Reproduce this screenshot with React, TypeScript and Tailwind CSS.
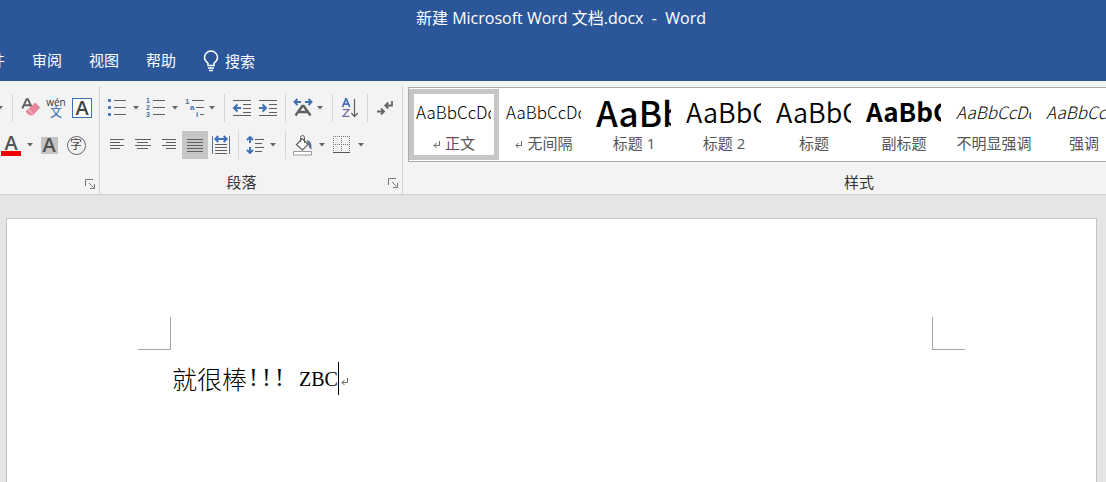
import type { ReactNode } from "react";

const UI = "font-['Open_Sans','Noto_Sans_CJK_SC',sans-serif]";
const BLUE = "#3f6fb5";
const INK = "#5f5f5f";

type ToolProps = { label: string; className?: string; children: ReactNode };

function Tool({ label, className = "w-5", children }: ToolProps) {
  return (
    <button type="button" aria-label={label} title={label} className={`flex h-7 shrink-0 items-center justify-center ${className}`}>
      {children}
    </button>
  );
}

function Chevron({ label, className = "" }: { label: string; className?: string }) {
  return (
    <button type="button" aria-label={label} className={`flex h-7 w-2 shrink-0 items-center justify-center ${className}`}>
      <svg width="8" height="6" viewBox="0 0 8 6" className="shrink-0">
        <path d="M1 1h6L4 4.6z" fill="#666" />
      </svg>
    </button>
  );
}

function Divider({ className = "" }: { className?: string }) {
  return <span className={`h-7 w-px shrink-0 bg-[#d6d6d6] ${className}`} />;
}

function Launcher({ label }: { label: string }) {
  return (
    <button type="button" aria-label={label} className="flex h-6 w-[15px] shrink-0 items-center pt-0.5">
      <svg width="12" height="12" viewBox="0 0 12 12" fill="none" stroke="#777">
        <path d="M1.5 8V1.5H9" />
        <path d="M5 5l4.500 4.500M10.500 6v4.500H6" />
      </svg>
    </button>
  );
}

function Lines({ rows }: { rows: [number, number][] }) {
  return (
    <svg width="16" height="14" viewBox="0 0 16 14" stroke={INK} shapeRendering="crispEdges">
      {rows.map(([a, b], i) => (
        <path key={i} d={`M${a} ${i * 3 + 1.5}H${b}`} />
      ))}
    </svg>
  );
}

function FontGroup() {
  return (
    <section aria-label="字体" className="flex w-[100px] shrink-0 flex-col pt-[5px]">
      <div className="flex flex-1 flex-col border-r border-[#d4d4d4] pt-2">
        <div className="flex">
          <Chevron label="更改大小写" className="-ml-1" />
          <Divider className="ml-2" />
          <Tool label="清除所有格式" className="ml-2 w-5">
            <svg width="20" height="22" viewBox="0 0 20 22">
              <path d="M1.300 11.500L5.600 2.200h1.300l3.700 7.800M3 8.300h6" fill="none" stroke={INK} strokeWidth="1.9" />
              <path d="M14.200 5.500l5 5-7.200 7.700H8L4.500 14.600z" fill="#e8879b" />
              <path d="M7.200 12.200l5 5" stroke="#f7d6dc" />
            </svg>
          </Tool>
          <Tool label="拼音指南" className="ml-1.5 w-[18px] flex-col">
            <span className="text-[10px] leading-[9px] text-[#333]">wén</span>
            <span className="text-[12px] leading-[12px] text-[#2f63b0]">文</span>
          </Tool>
          <Tool label="字符边框" className="ml-1.5 w-[22px]">
            <span className="flex h-5 w-5 items-center justify-center border border-[#3f6fb5] bg-white text-[20px] leading-none font-semibold text-[#444]">A</span>
          </Tool>
        </div>
        <div className="mt-[9px] flex">
          <Tool label="字体颜色" className="w-[22px] flex-col">
            <span className="text-[20px] leading-[16px] font-semibold text-[#555]">A</span>
            <span className="h-[5px] w-5 bg-[#f00000]" />
          </Tool>
          <Chevron label="更多字体颜色" className="ml-1" />
          <Tool label="字符底纹" className="ml-1.5 w-[18px]">
            <span className="flex h-[17px] w-[17px] items-center justify-center bg-[#c4c4c4] text-[20px] leading-none font-semibold text-[#505050]">A</span>
          </Tool>
          <Tool label="带圈字符" className="ml-2 w-5">
            <span className="flex h-[19px] w-[19px] items-center justify-center rounded-full border border-[#666] text-[12px] leading-none text-[#444]">字</span>
          </Tool>
        </div>
        <div className="mt-3 flex justify-end">
          <Launcher label="字体设置" />
        </div>
      </div>
    </section>
  );
}

function ListIcon({ kind }: { kind: "bullet" | "number" }) {
  return (
    <svg width="20" height="20" viewBox="0 0 20 20">
      {[3, 10, 17].map((y, i) => (
        <g key={y}>
          {kind === "bullet" ? (
            <rect x="1" y={y - 2} width="3" height="3" rx="1" fill={BLUE} />
          ) : (
            <text x="0" y={y + 2} fontSize="7" fontWeight="bold" fontFamily="Liberation Sans" fill="#4a6f9f">{i + 1}</text>
          )}
          <path d={`M7 ${y - 0.5}h12`} stroke={INK} />
        </g>
      ))}
    </svg>
  );
}

function IndentIcon({ out }: { out: boolean }) {
  return (
    <svg width="20" height="18" viewBox="0 0 20 18" fill="none">
      <path d="M1 1.500h18M11 5.500h8M11 9.500h8M11 13.500h8M1 16.500h18" stroke={INK} />
      <path d={out ? "M9 9H2M5.500 5.500L2 9l3.500 3.500" : "M1 9h7M4.500 5.500L8 9l-3.500 3.500"} stroke={BLUE} strokeWidth="2" />
    </svg>
  );
}

function ParagraphGroup() {
  return (
    <section aria-label="段落" className="flex w-[303px] shrink-0 flex-col pt-[5px]">
      <div className="flex flex-1 flex-col border-r border-[#d4d4d4] pt-2">
        <div className="flex pl-[7px]">
          <Tool label="项目符号"><ListIcon kind="bullet" /></Tool>
          <Chevron label="项目符号库" className="ml-[5px]" />
          <Tool label="编号" className="ml-1.5 w-5"><ListIcon kind="number" /></Tool>
          <Chevron label="编号库" className="ml-[5px]" />
          <Tool label="多级列表" className="ml-1.5 w-5">
            <svg width="20" height="20" viewBox="0 0 20 20" fontFamily="Liberation Sans" fontSize="8" fontWeight="bold">
              <path d="M7 2.500h12M11 9.500h8M15 16.500h4" stroke={INK} />
              <text x="0" y="6" fill="#4a6f9f">1</text>
              <text x="5" y="12" fill={BLUE}>a</text>
              <text x="11" y="19" fill={BLUE}>i</text>
            </svg>
          </Tool>
          <Chevron label="列表库" className="ml-[3px]" />
          <Divider className="ml-2" />
          <Tool label="减少缩进量" className="ml-[7px] w-5"><IndentIcon out /></Tool>
          <Tool label="增加缩进量" className="ml-1.5 w-5"><IndentIcon out={false} /></Tool>
          <Divider className="ml-[7px]" />
          <Tool label="中文版式" className="ml-[7px] w-5">
            <svg width="20" height="20" viewBox="0 0 20 20" fill="none">
              <path d="M1.500 4H8M4.500 1L1.500 4l3 3M12 4h6.500M15.500 1l3 3-3 3" stroke={BLUE} strokeWidth="1.900" />
              <path d="M2.500 17.500L9.300 8h1.400l6.800 9.500M6 14h8" stroke={INK} strokeWidth="2.400" />
            </svg>
          </Tool>
          <Chevron label="中文版式选项" className="ml-[3px]" />
          <Divider className="ml-2" />
          <Tool label="排序" className="ml-2 w-[18px]">
            <svg width="18" height="22" viewBox="0 0 18 22" fill="none">
              <path d="M1.500 10L4.900 1.800h.4L8.700 10M2.600 7.200h5" stroke={BLUE} strokeWidth="1.700" />
              <path d="M1.800 12.700h6L2 19.300h6.400" stroke="#7a6c99" strokeWidth="1.300" />
              <path d="M13.500 2v17.500M10.300 16l3.200 3.500 3.200-3.500" stroke={INK} strokeWidth="1.200" />
            </svg>
          </Tool>
          <Divider className="ml-2" />
          <Tool label="显示编辑标记" className="ml-2 w-[18px]">
            <svg width="18" height="18" viewBox="0 0 18 18" fill="none" stroke="#666" strokeWidth="1.800">
              <path d="M16 2v4.500H9M12.300 3.500l-3 3 3 3" />
              <path d="M1 12.500h7M5 9.500l3 3-3 3" />
            </svg>
          </Tool>
        </div>
        <div className="mt-[9px] flex pl-[7px]">
          <Tool label="左对齐" className="ml-0.5 w-4"><Lines rows={[[1, 15], [1, 11], [1, 15], [1, 11]]} /></Tool>
          <Tool label="居中" className="ml-2.5 w-4"><Lines rows={[[0, 16], [2, 13], [0, 16], [2, 13]]} /></Tool>
          <Tool label="右对齐" className="ml-2.5 w-4"><Lines rows={[[1, 15], [5, 15], [1, 15], [5, 15]]} /></Tool>
          <Tool label="两端对齐" className="ml-[5px] w-[26px] bg-[#c6c6c6]"><Lines rows={[[0, 16], [0, 16], [0, 16], [0, 16], [0, 16]]} /></Tool>
          <Tool label="分散对齐" className="ml-1 w-[18px]">
            <svg width="18" height="20" viewBox="0 0 18 20" fill="none">
              <path d="M.5 1v18M17.500 1v18" stroke="#5f7391" />
              <path d="M3.500 4h11M6.300 1l-3 3 3 3M11.700 1l3 3-3 3" stroke={BLUE} strokeWidth="1.900" />
              <path d="M3 9.500h12M3 12.500h12M3 15.500h12M3 18.500h12" stroke={INK} />
            </svg>
          </Tool>
          <Divider className="ml-2" />
          <Tool label="行和段落间距" className="ml-[7px] w-[18px]">
            <svg width="18" height="20" viewBox="0 0 18 20" fill="none">
              <path d="M4 2v6M1 5l3-3 3 3M4 12v6M1 15l3 3 3-3" stroke={BLUE} strokeWidth="1.900" />
              <path d="M9 4.500h9M9 8.500h7M9 12.500h9M9 16.500h7" stroke={INK} />
            </svg>
          </Tool>
          <Chevron label="行距选项" className="ml-[5px]" />
          <Divider className="ml-2" />
          <Tool label="底纹" className="ml-[7px] w-5">
            <svg width="20" height="21" viewBox="0 0 20 21" fill="none">
              <path d="M9 3.500l6 5.800-5.500 5.700-6-5.200z" fill="#fff" stroke={INK} strokeWidth="1.200" />
              <path d="M7.500 7V2.500a2 2 0 014 0V8" stroke={INK} />
              <path d="M13.500 5c4 1 5.500 3.200 5 9.500-1.800-.8-2.800-2.600-3.200-5z" fill="#5a7090" />
              <path d="M.5 16.500h18v3.500H.5z" fill="#fff" stroke="#999" />
            </svg>
          </Tool>
          <Chevron label="底纹颜色" className="ml-[5px]" />
          <Tool label="边框" className="ml-[7px] w-[18px]">
            <svg width="18" height="18" viewBox="0 0 18 18" fill="none" stroke="#777" shapeRendering="crispEdges">
              <path d="M.5 0v17M8.500 0v17M16.500 0v17M0 .5h17M0 8.500h17" strokeDasharray="1 1" />
              <path d="M0 16.500h17" stroke="#555" />
            </svg>
          </Tool>
          <Chevron label="边框选项" className="ml-1.5" />
        </div>
        <div className="mt-[11px] flex">
          <h2 className="flex-1 pr-1 text-center text-[15px] leading-6 text-[#333]">段落</h2>
          <Launcher label="段落设置" />
        </div>
      </div>
    </section>
  );
}

type StyleItem = { name: string; sample: string; look: string; mark?: boolean; selected?: boolean };

const STYLES: StyleItem[] = [
  { name: "正文", sample: "AaBbCcDd", look: "text-[17px] font-light", mark: true, selected: true },
  { name: "无间隔", sample: "AaBbCcDd", look: "text-[17px] font-light", mark: true },
  { name: "标题 1", sample: "AaBb", look: "text-[35px] font-medium" },
  { name: "标题 2", sample: "AaBbC", look: "text-[27px] font-[350]" },
  { name: "标题", sample: "AaBbC", look: "text-[27px] font-[350]" },
  { name: "副标题", sample: "AaBbC", look: "text-[26px] font-bold" },
  { name: "不明显强调", sample: "AaBbCcDd", look: "text-[17px] font-light italic text-[#404040]" },
  { name: "强调", sample: "AaBbCcDd", look: "text-[17px] font-light italic" },
];

function ReturnMark({ className = "" }: { className?: string }) {
  return (
    <svg width="8" height="8" viewBox="0 0 8 8" fill="none" stroke="#666" className={`shrink-0 ${className}`}>
      <path d="M6.500 0v4.500H1M3.500 2L1 4.500 3.500 7" />
    </svg>
  );
}

function StylesGroup() {
  return (
    <section aria-label="样式" className="flex min-w-0 flex-1 flex-col pt-1.5 pl-[5px]">
      <div className="flex h-[75px] overflow-hidden border-y border-l border-[#ababab] bg-white">
        {STYLES.map((s) => (
          <button
            key={s.name}
            type="button"
            aria-pressed={!!s.selected}
            className={`my-px flex w-[90px] shrink-0 flex-col border-[5px] px-0.5 ${s.selected ? "border-[#c6c6c6]" : "border-transparent"}`}
          >
            <span className={`-mt-1 flex h-[42px] w-[75px] items-center overflow-hidden font-['Noto_Sans_CJK_SC',sans-serif] leading-none whitespace-nowrap text-black ${s.look}`}>
              {s.sample}
            </span>
            <span className="mt-px flex h-5 w-full items-center justify-center text-[15px] leading-5 whitespace-nowrap text-[#555]">
              {s.mark && <ReturnMark className="mt-1 mr-1" />}
              {s.name}
            </span>
          </button>
        ))}
      </div>
      <h2 className="mt-2 pl-[204px] text-center text-[15px] leading-6 text-[#333]">样式</h2>
    </section>
  );
}

const TABS = ["邮件", "审阅", "视图", "帮助"];

export default function App() {
  return (
    <div className={`flex min-h-screen flex-col overflow-hidden bg-[#e5e5e5] ${UI}`}>
      <header className="bg-[#2b579a] text-white">
        <h1 className="h-[37px] pl-4 text-center text-[16px] leading-[37px] whitespace-pre">新建 Microsoft Word 文档.docx  -  Word</h1>
        <nav className="-ml-[25px] flex h-11 items-center gap-[27px] pt-0.5 text-[15px]">
          {TABS.map((t) => (
            <a key={t} href="#" className="whitespace-nowrap">{t}</a>
          ))}
          <button type="button" className="flex items-center gap-1.5 pt-0.5 whitespace-nowrap">
            <svg width="16" height="22" viewBox="0 0 16 22" fill="none" stroke="white" strokeWidth="1.500">
              <path d="M5 15.500v-2.200C3 11.800 1.500 10.200 1.500 7.600a6.500 6.500 0 0113 0c0 2.600-1.500 4.200-3.500 5.700v2.200z" />
              <path d="M5 18h6M6 20.500h4" />
            </svg>
            搜索
          </button>
        </nav>
      </header>

      <div className="flex h-[114px] overflow-hidden border-b border-[#cfcfcf] bg-[#f3f3f3]">
        <FontGroup />
        <ParagraphGroup />
        <StylesGroup />
      </div>

      <main className="mt-[23px] mr-[9px] ml-1.5 flex-1 border border-b-0 border-[#c3c3c3] bg-white px-[131px] pt-[98px]">
        <div className="flex justify-between">
          <span className="h-[33px] w-[33px] border-r border-b border-[#a6a6a6]" />
          <span className="h-[33px] w-[33px] border-b border-l border-[#a6a6a6]" />
        </div>
        <p className="mt-2.5 flex items-center pl-[34px] text-[25px] leading-[34px] whitespace-pre text-black">
          <span className="font-['Noto_Sans_CJK_SC',sans-serif] font-light">就很棒</span>
          <span className="flex font-['Liberation_Serif',serif]">
            {["!", "!", "!", " "].map((c, i) => (
              <span key={i} className="w-[13px] text-center">{c}</span>
            ))}
          </span>
          <span className="pt-0.5 font-['Liberation_Serif',serif] text-[20px]">ZBC</span>
          <span className="h-[33px] w-px bg-black" />
          <ReturnMark className="mt-2 ml-0.5" />
        </p>
      </main>
    </div>
  );
}
